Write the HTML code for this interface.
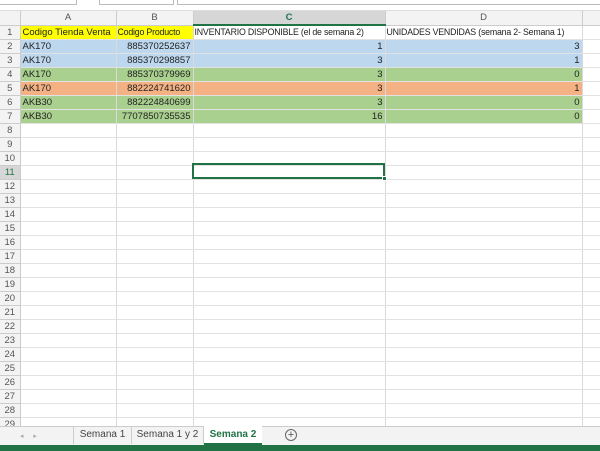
<!DOCTYPE html><html><head><style>
body{margin:0;width:600px;height:451px;overflow:hidden;background:#fff;font-family:"Liberation Sans",sans-serif;font-size:10px;position:relative}
.a{position:absolute;box-sizing:border-box}
table{border-collapse:collapse;position:absolute;left:0;top:11px;table-layout:fixed;width:600px}
td{height:13px;border-right:1px solid #dadada;border-bottom:1px solid #e2e2e2;padding:0 2px;white-space:nowrap;overflow:hidden;color:#222;font-size:9.5px;line-height:13px}
td.h{background:#f3f3f3;color:#555;text-align:center;border-color:#ccc;padding:0}
td.r{text-align:right}
td.s{font-size:8.8px;letter-spacing:-0.2px;padding:0 1px}
.bl td:not(.h){background:#bdd7ee}.gr td:not(.h){background:#a9d08e}.or td:not(.h){background:#f4b183}
</style></head><body>
<div class="a" style="left:0;top:0;width:600px;height:11px;background:#fff;border-bottom:1px solid #ddd"></div>
<div class="a" style="left:-2px;top:-3px;width:79px;height:8px;border:1px solid #bbb"></div>
<div class="a" style="left:99px;top:-3px;width:75px;height:8px;border:1px solid #bbb"></div>
<div class="a" style="left:177px;top:-3px;width:430px;height:8px;border:1px solid #bbb"></div>
<table>
<colgroup><col style="width:20px"><col style="width:96px"><col style="width:77px"><col style="width:192px"><col style="width:197px"><col style="width:18px"></colgroup>
<tr><td class="h"></td><td class="h">A</td><td class="h">B</td><td class="h" style="background:#d6d6d6;color:#217346;font-weight:bold;border-bottom:2px solid #217346">C</td><td class="h">D</td><td class="h"></td></tr>
<tr><td class="h">1</td><td style="background:#ff0">Codigo Tienda Venta</td><td style="background:#ff0" class="s">Codigo Producto</td><td class="s">INVENTARIO DISPONIBLE (el de semana 2)</td><td class="s">UNIDADES VENDIDAS (semana 2- Semana 1)</td><td></td></tr>
<tr class="bl"><td class="h">2</td><td>AK170</td><td class="r">885370252637</td><td class="r">1</td><td class="r">3</td><td style="background:#fff"></td></tr>
<tr class="bl"><td class="h">3</td><td>AK170</td><td class="r">885370298857</td><td class="r">3</td><td class="r">1</td><td style="background:#fff"></td></tr>
<tr class="gr"><td class="h">4</td><td>AK170</td><td class="r">885370379969</td><td class="r">3</td><td class="r">0</td><td style="background:#fff"></td></tr>
<tr class="or"><td class="h">5</td><td>AK170</td><td class="r">882224741620</td><td class="r">3</td><td class="r">1</td><td style="background:#fff"></td></tr>
<tr class="gr"><td class="h">6</td><td>AKB30</td><td class="r">882224840699</td><td class="r">3</td><td class="r">0</td><td style="background:#fff"></td></tr>
<tr class="gr"><td class="h">7</td><td>AKB30</td><td class="r">7707850735535</td><td class="r">16</td><td class="r">0</td><td style="background:#fff"></td></tr>
<tr><td class="h">8</td><td></td><td></td><td></td><td></td><td></td></tr>
<tr><td class="h">9</td><td></td><td></td><td></td><td></td><td></td></tr>
<tr><td class="h">10</td><td></td><td></td><td></td><td></td><td></td></tr>
<tr><td class="h" style="background:#d6d6d6;color:#217346">11</td><td></td><td></td><td></td><td></td><td></td></tr>
<tr><td class="h">12</td><td></td><td></td><td></td><td></td><td></td></tr>
<tr><td class="h">13</td><td></td><td></td><td></td><td></td><td></td></tr>
<tr><td class="h">14</td><td></td><td></td><td></td><td></td><td></td></tr>
<tr><td class="h">15</td><td></td><td></td><td></td><td></td><td></td></tr>
<tr><td class="h">16</td><td></td><td></td><td></td><td></td><td></td></tr>
<tr><td class="h">17</td><td></td><td></td><td></td><td></td><td></td></tr>
<tr><td class="h">18</td><td></td><td></td><td></td><td></td><td></td></tr>
<tr><td class="h">19</td><td></td><td></td><td></td><td></td><td></td></tr>
<tr><td class="h">20</td><td></td><td></td><td></td><td></td><td></td></tr>
<tr><td class="h">21</td><td></td><td></td><td></td><td></td><td></td></tr>
<tr><td class="h">22</td><td></td><td></td><td></td><td></td><td></td></tr>
<tr><td class="h">23</td><td></td><td></td><td></td><td></td><td></td></tr>
<tr><td class="h">24</td><td></td><td></td><td></td><td></td><td></td></tr>
<tr><td class="h">25</td><td></td><td></td><td></td><td></td><td></td></tr>
<tr><td class="h">26</td><td></td><td></td><td></td><td></td><td></td></tr>
<tr><td class="h">27</td><td></td><td></td><td></td><td></td><td></td></tr>
<tr><td class="h">28</td><td></td><td></td><td></td><td></td><td></td></tr>
<tr><td class="h">29</td><td></td><td></td><td></td><td></td><td></td></tr>
</table>
<div class="a" style="left:192px;top:163px;width:193px;height:16px;border:2px solid #217346"></div>
<div class="a" style="left:382px;top:176px;width:5px;height:5px;background:#217346;border:1px solid #fff"></div>
<div class="a" style="left:0;top:426px;width:600px;height:19px;background:#f3f3f3;border-top:1px solid #ccc;font-size:10px;color:#444"></div>
<div class="a" style="left:20px;top:432px;font-size:7px;color:#aaa">◂&nbsp;&nbsp;&nbsp;&nbsp;&nbsp;▸</div>
<div class="a" style="left:73px;top:426px;width:59px;height:18px;border-left:1px solid #ccc;border-right:1px solid #ccc;text-align:center;line-height:18px;color:#444">Semana 1</div>
<div class="a" style="left:132px;top:426px;width:72px;height:18px;border-right:1px solid #ccc;text-align:center;line-height:18px;color:#444">Semana 1 y 2</div>
<div class="a" style="left:204px;top:425px;width:58px;height:20px;background:#fff;border-bottom:2px solid #217346;text-align:center;line-height:19px;color:#217346;font-weight:bold">Semana 2</div>
<div class="a" style="left:285px;top:429px;width:12px;height:12px;border:1px solid #666;border-radius:50%;text-align:center;line-height:10px;font-size:11px;color:#555">+</div>
<div class="a" style="left:0;top:445px;width:600px;height:6px;background:#217346"></div>
</body></html>
